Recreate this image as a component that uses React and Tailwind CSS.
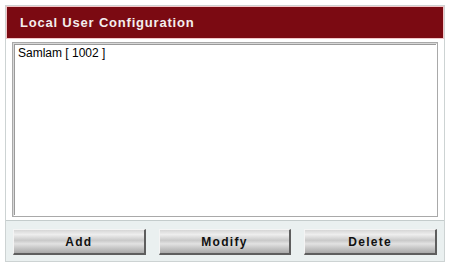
import React from 'react';

const buttons = ['Add', 'Modify', 'Delete'];

const App = () => {
  return (
    <div className="w-[450px] h-[269px] bg-white pt-[5px] pl-[5px]" style={{ fontFamily: '"Liberation Sans", Arial, sans-serif' }}>
      <div className="w-[440px] h-[257px] border border-[#cdd3d3] bg-[#eef2f2] flex flex-col">
        {/* header */}
        <div className="h-[33px] bg-[#7b0a12] border border-[#f2c6c8] flex items-center pl-[13px] shrink-0">
          <span className="text-[13px] font-bold text-[#f4eeee] tracking-[0.8px]">Local User Configuration</span>
        </div>

        {/* list */}
        <div className="bg-white px-[6px] pt-[3px] pb-[3px] flex-1 flex">
          <div className="flex-1 border border-[#a9a9a9] shadow-[inset_1px_1px_0_#d8d8d8] p-[1px]">
            <div className="h-full border-t border-l border-[#9a9a9a] bg-white px-[3px] pt-[1px]">
              <div className="text-[12px] text-black leading-[14px]">Samlam [ 1002 ]</div>
            </div>
          </div>
        </div>

        {/* buttons */}
        <div className="h-[41px] border-t border-[#c4cccc] bg-[#eaf0f0] flex items-start pt-[8px] px-[7px] gap-[13px] shrink-0">
          {buttons.map(b => (
            <button
              key={b}
              className="w-[133px] h-[26px] flex items-center justify-center text-[12px] font-bold tracking-[1.3px] text-[#111] border-t border-l border-[#f4f4f4] border-r-2 border-b-2 border-r-[#5e5e5e] border-b-[#5e5e5e] bg-[linear-gradient(to_bottom,#d6d6d6_0%,#eeeeee_20%,#c9c9c9_45%,#e2e2e2_60%,#c4c4c4_80%,#a9a9a9_100%)]"
            >
              {b}
            </button>
          ))}
        </div>
      </div>
    </div>
  );
};

export default App;
